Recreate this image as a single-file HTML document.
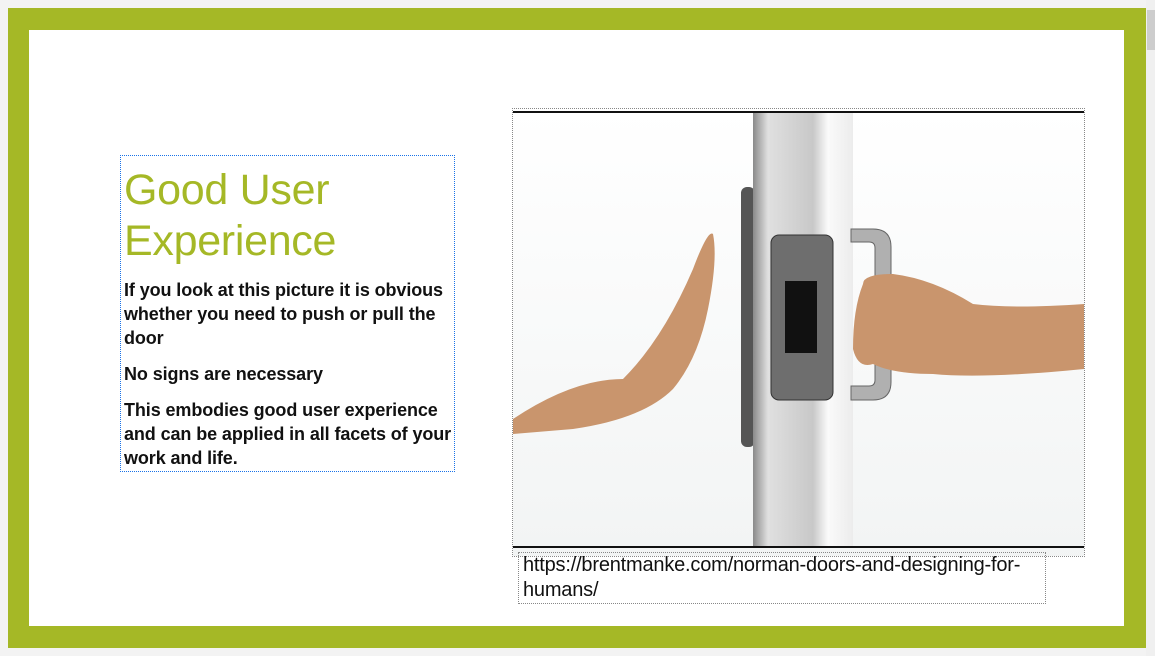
<!DOCTYPE html>
<html><head><meta charset="utf-8"><style>
body{margin:0;width:1155px;height:656px;background:#f3f3f3;position:relative;overflow:hidden;font-family:"Liberation Sans",sans-serif}
.frame{position:absolute;left:8px;top:8px;width:1138px;height:640px;background:#a5b826}
.inner{position:absolute;left:29px;top:30px;width:1095px;height:596px;background:#fff}
.sb{position:absolute;left:1146px;top:0;width:9px;height:656px;background:#f0f0f0}
.thumb{position:absolute;left:1147px;top:10px;width:8px;height:40px;background:#cdcdcd}
.tb{position:absolute;left:120px;top:155px;width:333px;height:315px;border:1px dotted #1a73e8}
h1{margin:0;position:absolute;left:3px;top:9px;font-weight:normal;color:#a5b826;font-size:43px;line-height:51px;letter-spacing:-0.3px;white-space:nowrap}
.p{position:absolute;left:3px;font-weight:bold;font-size:18px;line-height:24px;color:#111;white-space:nowrap;letter-spacing:-0.1px}
.img{position:absolute;left:512px;top:108px;width:571px;height:447px;border:1px dotted #888}
.cap{position:absolute;left:518px;top:552px;width:528px;height:52px;border:1px dotted #888;font-size:20px;line-height:25px;color:#111;padding-left:4px;box-sizing:border-box;white-space:nowrap;letter-spacing:-0.2px}
</style></head><body>
<div class="frame"></div><div class="inner"></div>
<div class="sb"></div><div class="thumb"></div>
<div class="tb">
<h1>Good User<br>Experience</h1>
<div class="p" style="top:122px">If you look at this picture it is obvious<br>whether you need to push or pull the<br>door</div>
<div class="p" style="top:206px">No signs are necessary</div>
<div class="p" style="top:242px">This embodies good user experience<br>and can be applied in all facets of your<br>work and life.</div>
</div>
<div class="img">
<svg width="571" height="447" viewBox="0 0 571 447">
<defs>
<linearGradient id="d" x1="0" x2="1"><stop offset="0" stop-color="#8a8a8a"/><stop offset="0.15" stop-color="#e0e0e0"/><stop offset="0.6" stop-color="#c8c8c8"/><stop offset="0.75" stop-color="#fafafa"/><stop offset="1" stop-color="#ececec"/></linearGradient>
<linearGradient id="bg" x1="0" y1="0" x2="0" y2="1"><stop offset="0" stop-color="#fff"/><stop offset="1" stop-color="#f2f4f4"/></linearGradient>
</defs>
<rect width="571" height="447" fill="url(#bg)"/>
<rect x="0" y="2" width="571" height="2" fill="#111"/>
<rect x="0" y="437" width="571" height="2" fill="#111"/>
<rect x="228" y="78" width="14" height="260" rx="6" fill="#555"/>
<rect x="240" y="4" width="100" height="433" fill="url(#d)"/>
<path d="M338 120 h22 q18 0 18 18 v135 q0 18 -18 18 h-22 v-14 h18 q6 0 6-6 v-132 q0-6-6-6 h-18z" fill="#b0b0b0" stroke="#666"/>
<rect x="258" y="126" width="62" height="165" rx="8" fill="#6e6e6e" stroke="#333"/>
<rect x="272" y="172" width="32" height="72" fill="#111"/>
<path d="M0 310 Q60 270 110 270 Q150 230 180 160 Q195 120 200 125 Q205 150 195 200 Q185 250 160 280 Q130 310 60 320 L0 325z" fill="#c9956d"/>
<path d="M571 195 Q500 200 460 195 Q420 170 380 165 Q350 165 350 175 Q340 200 340 240 Q345 260 360 255 Q380 265 420 265 Q470 270 571 260z" fill="#c9956d"/>
</svg>
</div>
<div class="cap">https://brentmanke.com/norman-doors-and-designing-for-<br>humans/</div>
</body></html>
